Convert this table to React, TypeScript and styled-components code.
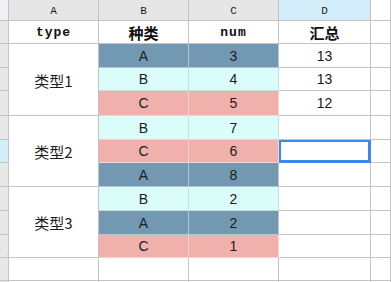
import React from 'react';
import styled, { createGlobalStyle, css } from 'styled-components';

const GlobalStyle = createGlobalStyle`
  html, body {
    margin: 0;
    padding: 0;
    background: #fff;
    overflow: hidden;
  }
  body {
    font-family: 'Liberation Sans', 'Noto Sans CJK SC', sans-serif;
  }
`;

const GRID = '#c4c4c4';

const Sheet = styled.div`
  display: grid;
  grid-template-columns: 9px 90px 90px 90px 92px 20px;
  grid-template-rows: 21px 23px 24px 23px 25px 24px 23px 24px 24px 24px 23px 23px 2px;
  width: 391px;
  height: 282px;
  overflow: hidden;
`;

const Cell = styled.div`
  box-sizing: border-box;
  border-right: 1px solid ${GRID};
  border-bottom: 1px solid ${GRID};
  display: flex;
  align-items: center;
  justify-content: center;
  overflow: hidden;
  white-space: nowrap;
  color: #1c1c1c;
  font-size: 14px;
`;

const Corner = styled(Cell)`
  background: #f1f1f4;
`;

const ColHead = styled(Cell)<{ $active?: boolean; $blank?: boolean }>`
  background: ${(p) => (p.$blank ? '#fff' : p.$active ? '#d3eefa' : '#e6e6e6')};
  font-family: 'Liberation Mono', 'DejaVu Sans Mono', monospace;
  font-size: 11px;
  padding-top: 2px;
`;

const RowHead = styled(Cell)<{ $active?: boolean }>`
  grid-column: 1;
  background: ${(p) => (p.$active ? '#d2eefa' : '#e7e7e7')};
  justify-content: flex-start;
  font-size: 10px;
  color: #000;
`;

/* row numbers sit mostly under the scrolled-off part of the header column */
const RowNum = styled.span`
  margin-left: -5px;
`;

const Title = styled(Cell)<{ $mono?: boolean }>`
  background: #fff;
  font-weight: bold;
  font-size: ${(p) => (p.$mono ? '13px' : '15px')};
  font-family: ${(p) =>
    p.$mono
      ? "'Liberation Mono', 'DejaVu Sans Mono', monospace"
      : "'Noto Sans CJK SC', sans-serif"};
  letter-spacing: ${(p) => (p.$mono ? '1px' : '0')};
  color: #111;
`;

const Group = styled(Cell)<{ $span: number }>`
  grid-column: 2;
  grid-row: span ${(p) => p.$span};
  font-size: 15px;
  font-family: 'Noto Sans CJK SC', sans-serif;
  padding-top: 1px;
`;

type Kind = 'A' | 'B' | 'C';

const fills: Record<Kind, string> = {
  A: '#7399b2',
  B: '#dafdfa',
  C: '#f0b1ac',
};

const Colored = styled(Cell)<{ $kind: Kind; $first?: boolean }>`
  ${(p) => p.$first && 'grid-column: 3;'}
  background: ${(p) => fills[p.$kind]};
  border-color: ${(p) => (p.$kind === 'B' ? '#c9dedd' : 'rgba(255, 255, 255, 0.45)')};
  font-size: 14px;
`;

const Total = styled(Cell)<{ $selected?: boolean }>`
  position: relative;
  background: #fff;
  ${(p) =>
    p.$selected &&
    css`
      box-shadow: inset 0 0 0 2px #3b87ec;
      border-right-color: #3b87ec;
      border-bottom-color: #3b87ec;
      &::after {
        content: '';
        position: absolute;
        right: -3px;
        bottom: -3px;
        width: 5px;
        height: 5px;
        background: #3b87ec;
        z-index: 2;
      }
    `}
`;

const Blank = styled(Cell)`
  background: #fff;
`;

const rows: { kind: Kind; num: number; total?: string }[] = [
  { kind: 'A', num: 3, total: '13' },
  { kind: 'B', num: 4, total: '13' },
  { kind: 'C', num: 5, total: '12' },
  { kind: 'B', num: 7 },
  { kind: 'C', num: 6 },
  { kind: 'A', num: 8 },
  { kind: 'B', num: 2 },
  { kind: 'A', num: 2 },
  { kind: 'C', num: 1 },
];

const groups = ['类型1', '类型2', '类型3'];

const App: React.FC = () => {
  return (
    <>
      <GlobalStyle />
      <Sheet>
        <Corner />
        <ColHead>A</ColHead>
        <ColHead>B</ColHead>
        <ColHead>C</ColHead>
        <ColHead $active>D</ColHead>
        <ColHead $blank />

        <RowHead />
        <Title $mono>type</Title>
        <Title>种类</Title>
        <Title $mono>num</Title>
        <Title>汇总</Title>
        <Blank />

        {rows.map((r, i) => (
          <React.Fragment key={i}>
            <RowHead $active={i === 4}>{i === 8 && <RowNum>1</RowNum>}</RowHead>
            {i % 3 === 0 && <Group $span={3}>{groups[i / 3]}</Group>}
            <Colored $kind={r.kind} $first>
              {r.kind}
            </Colored>
            <Colored $kind={r.kind}>{r.num}</Colored>
            <Total $selected={i === 4}>{r.total}</Total>
            <Blank />
          </React.Fragment>
        ))}

        {[0, 1].map((k) => (
          <React.Fragment key={`tail-${k}`}>
            <RowHead />
            <Blank />
            <Blank />
            <Blank />
            <Blank />
            <Blank />
          </React.Fragment>
        ))}
      </Sheet>
    </>
  );
};

export default App;
